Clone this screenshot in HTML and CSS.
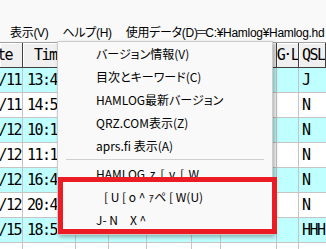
FILE: index.html
```html
<!DOCTYPE html>
<html lang="ja">
<head>
    <meta charset="UTF-8">
    <meta name="viewport" content="width=device-width, initial-scale=1.0">
    <title>Hamlog</title>
    <link rel="stylesheet" href="styles.css">
</head>
<body>
    <div class="topstrip"></div>
    <div class="menubar">
        <span class="mb-item">表示(V)</span>
        <span class="mb-item">ヘルプ(H)</span>
        <span class="mb-item">使用データ(D)<span class="eq">＝</span>C:¥Hamlog¥Hamlog.hd</span>
    </div>

    <div class="grid">
        <div class="row head">
            <div class="cell c1 right"><span class="hd-date">Date</span></div>
            <div class="cell c2 center">Time</div>
            <div class="cell c3 center">His</div>
            <div class="cell c4 center">My</div>
            <div class="cell c5 center">Freq</div>
            <div class="cell c6 center">Mode</div>
            <div class="cell c7 center">Name</div>
            <div class="cell c8 center">G･L</div>
            <div class="cell c9">QSL</div>
        </div>
        <div class="row cyan">
            <div class="cell c1 right">01/11</div>
            <div class="cell c2">13:45J</div>
            <div class="cell c3">599</div><div class="cell c4">599</div><div class="cell c5">7</div>
            <div class="cell c6">CW</div><div class="cell c7"></div><div class="cell c8"></div>
            <div class="cell c9">J</div>
        </div>
        <div class="row">
            <div class="cell c1 right">01/11</div>
            <div class="cell c2">14:52J</div>
            <div class="cell c3">599</div><div class="cell c4">599</div><div class="cell c5">7</div>
            <div class="cell c6">CW</div><div class="cell c7"></div><div class="cell c8"></div>
            <div class="cell c9">N</div>
        </div>
        <div class="row cyan">
            <div class="cell c1 right">01/12</div>
            <div class="cell c2">10:15J</div>
            <div class="cell c3">599</div><div class="cell c4">599</div><div class="cell c5">7</div>
            <div class="cell c6">CW</div><div class="cell c7"></div><div class="cell c8"></div>
            <div class="cell c9">N</div>
        </div>
        <div class="row">
            <div class="cell c1 right">01/12</div>
            <div class="cell c2">11:18J</div>
            <div class="cell c3">599</div><div class="cell c4">599</div><div class="cell c5">7</div>
            <div class="cell c6">CW</div><div class="cell c7"></div><div class="cell c8"></div>
            <div class="cell c9">N</div>
        </div>
        <div class="row cyan">
            <div class="cell c1 right">01/12</div>
            <div class="cell c2">16:42J</div>
            <div class="cell c3">599</div><div class="cell c4">599</div><div class="cell c5">7</div>
            <div class="cell c6">CW</div><div class="cell c7"></div><div class="cell c8"></div>
            <div class="cell c9">N</div>
        </div>
        <div class="row">
            <div class="cell c1 right">01/12</div>
            <div class="cell c2">20:47J</div>
            <div class="cell c3">599</div><div class="cell c4">599</div><div class="cell c5">7</div>
            <div class="cell c6">CW</div><div class="cell c7"></div><div class="cell c8"></div>
            <div class="cell c9">N</div>
        </div>
        <div class="row cyan">
            <div class="cell c1 right">01/15</div>
            <div class="cell c2">18:53J</div>
            <div class="cell c3">599</div><div class="cell c4">599</div><div class="cell c5">7</div>
            <div class="cell c6">CW</div><div class="cell c7">HHHH</div><div class="cell c8"></div>
            <div class="cell c9">HHH</div>
        </div>
        <div class="row last">
            <div class="cell c1"></div><div class="cell c2"></div><div class="cell c3"></div>
            <div class="cell c4"></div><div class="cell c5"></div><div class="cell c6"></div>
            <div class="cell c7"></div><div class="cell c8"></div><div class="cell c9"></div>
        </div>
    </div>

    <!-- open help menu -->
    <div class="menu">
        <div class="menu-item">バージョン情報(V)</div>
        <div class="menu-item">目次とキーワード(C)</div>
        <div class="menu-item">HAMLOG最新バージョン</div>
        <div class="menu-item">QRZ.COM表示(Z)</div>
        <div class="menu-item">aprs.fi 表示(A)</div>
        <div class="menu-sep"></div>
        <div class="menu-item wide">HAMLOG z [ v [ W</div>
        <div class="menu-item indent">[ U [ o ^ ｧペ [ W(U)</div>
        <div class="menu-item">J- N　X ^</div>
    </div>

    <div class="mark"></div>
</body>
</html>
```

FILE: styles.css
```css
body {
    margin: 0;
    width: 326px;
    height: 249px;
    overflow: hidden;
    background: #fff;
    font-family: "Noto Sans CJK JP", sans-serif;
    font-size: 12px;
    color: #000;
    position: relative;
}

.topstrip {
    height: 21px;
    background: #f9f9f9;
}

.menubar {
    height: 21px;
    display: flex;
    align-items: center;
    padding-left: 3px;
    background: #f9f9f9;
    white-space: nowrap;
    overflow: hidden;
    letter-spacing: -0.3px;
    font-family: "Liberation Sans", "Noto Sans CJK JP", sans-serif;
    font-feature-settings: "palt";
}

.mb-item {
    padding: 0 7px;
}

.eq {
    margin: 0 -2px;
}

.grid {
    width: 326px;
    overflow: hidden;
    font-family: "DejaVu Sans Mono", monospace;
    font-size: 15px;
    letter-spacing: -1.5px;
}

.row {
    display: flex;
    height: 25px;
    box-sizing: border-box;
    border-bottom: 1px solid #c4c4c4;
}

.row.last {
    height: 6px;
    border-bottom: none;
}

.row.cyan .cell {
    background: #c0ffff;
}

.cell {
    box-sizing: border-box;
    border-right: 1px solid #c4c4c4;
    display: flex;
    align-items: center;
    padding-left: 4px;
    overflow: hidden;
    white-space: nowrap;
    flex-shrink: 0;
}

.cell.right {
    justify-content: flex-end;
    padding-left: 0;
    padding-right: 1px;
}

.cell.center {
    justify-content: center;
    padding-left: 0;
}

.c1 { width: 23px; }
.c2 { width: 53px; }
.c3 { width: 33px; }
.c4 { width: 38px; }
.c5 { width: 45px; }
.c6 { width: 29px; }
.c7 { width: 56px; }
.c8 { width: 22px; }
.c9 { width: 27px; padding-left: 3px; border-right: none; }

.row.head {
    height: 26px;
    border-top: 1px solid #a0a0a0;
    border-bottom: 1px solid #404040;
}

.row.head .cell {
    background: #f0f0f0;
    border-right: 1px solid #404040;
    box-shadow: inset 1px 1px 0 #fff;
}

.hd-date {
    padding-right: 9px;
}

.menu {
    position: absolute;
    left: 57px;
    top: 41px;
    width: 216px;
    box-sizing: border-box;
    padding-bottom: 3px;
    background: #f9f9f9;
    border: 1px solid #cccccc;
    box-shadow: 2px 2px 4px rgba(0, 0, 0, 0.3);
    font-feature-settings: "palt";
}

.menu-item {
    height: 23px;
    line-height: 23px;
    padding-left: 38px;
    white-space: nowrap;
}

.menu-item.wide {
    word-spacing: 2px;
}

.menu-item.indent {
    padding-left: 46px;
}

.menu-sep {
    height: 1px;
    margin: 2px 8px 2px 8px;
    background: #d0d0d0;
}

.mark {
    position: absolute;
    left: 58px;
    top: 177px;
    width: 219px;
    height: 57px;
    box-sizing: border-box;
    border: 5px solid #ec1c24;
}
```
